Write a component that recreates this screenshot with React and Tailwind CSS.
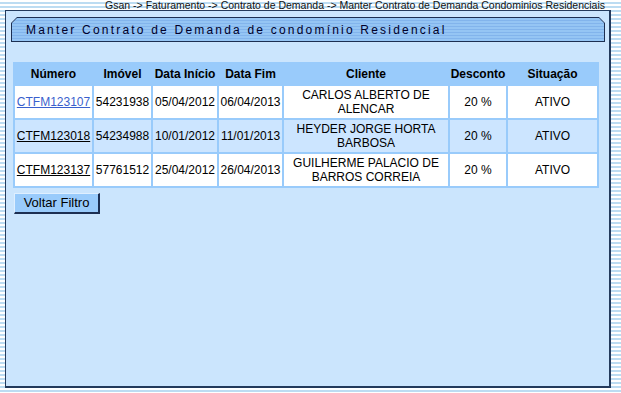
import React from 'react';

const rows = [
  { numero: 'CTFM123107', imovel: '54231938', inicio: '05/04/2012', fim: '06/04/2013', cliente: 'CARLOS ALBERTO DE ALENCAR', desconto: '20 %', situacao: 'ATIVO', visited: false },
  { numero: 'CTFM123018', imovel: '54234988', inicio: '10/01/2012', fim: '11/01/2013', cliente: 'HEYDER JORGE HORTA BARBOSA', desconto: '20 %', situacao: 'ATIVO', visited: true },
  { numero: 'CTFM123137', imovel: '57761512', inicio: '25/04/2012', fim: '26/04/2013', cliente: 'GUILHERME PALACIO DE BARROS CORREIA', desconto: '20 %', situacao: 'ATIVO', visited: true },
];

const headers = [
  { label: 'Número', w: 'w-[77px]' },
  { label: 'Imóvel', w: 'w-[57px]' },
  { label: 'Data Início', w: 'w-[64px]' },
  { label: 'Data Fim', w: 'w-[63px]' },
  { label: 'Cliente', w: 'w-[164px]' },
  { label: 'Desconto', w: 'w-[56px]' },
  { label: 'Situação', w: 'w-[89px]' },
];

function App() {
  return (
    <div className="h-[393px] w-[621px] overflow-hidden bg-[repeating-linear-gradient(to_bottom,#ffffff_0px,#ffffff_2px,#bcdcf2_2px,#bcdcf2_4px)] font-['Liberation_Sans',Arial,sans-serif] text-black">
      <div className="h-[10px] pr-[16px] text-right text-[10.5px] leading-[10px] text-[#111]">
        Gsan -&gt; Faturamento -&gt; Contrato de Demanda -&gt; Manter Contrato de Demanda Condominios Residenciais
      </div>
      <div className="ml-[5px] h-[378px] w-[606px] border border-b-2 border-r-2 border-[#233a5c] bg-[#cbe5fd] pl-[5px] pt-[6px]">
        <div className="h-[25px] w-[594px] bg-[#1c2f52] p-[1px] [clip-path:polygon(6px_0,calc(100%_-_6px)_0,100%_6px,100%_100%,0_100%,0_6px)]">
          <div className="flex h-full items-center bg-[repeating-linear-gradient(to_bottom,#95c5f4_0px,#95c5f4_2px,#82b4ec_2px,#82b4ec_3px)] pl-[14px] text-[12px] tracking-[2.2px] text-[#00002a] [clip-path:polygon(5px_0,calc(100%_-_5px)_0,100%_5px,100%_100%,0_100%,0_5px)]">
            Manter Contrato de Demanda de condomínio Residencial
          </div>
        </div>

        <table className="ml-[2px] mt-[20px] table-fixed border-separate border-spacing-[2px] bg-[#99cbfb] text-[12px] leading-[14px]">
          <thead>
            <tr>
              {headers.map(h => (
                <th key={h.label} className={`${h.w} h-[20px] p-0 text-center font-bold`}>{h.label}</th>
              ))}
            </tr>
          </thead>
          <tbody>
            {rows.map((r, i) => (
              <tr key={r.numero} className={i === 1 ? 'bg-[#cce5ff]' : 'bg-white'}>
                <td className="h-[32px] p-0 text-center">
                  <a href="#" className={r.visited ? 'text-black underline' : 'text-[#3a5fcd] underline'}>{r.numero}</a>
                </td>
                <td className="p-0 text-center">{r.imovel}</td>
                <td className="p-0 text-center">{r.inicio}</td>
                <td className="p-0 text-center">{r.fim}</td>
                <td className="px-[6px] py-0 text-center">{r.cliente}</td>
                <td className="p-0 text-center">{r.desconto}</td>
                <td className="p-0 text-center">{r.situacao}</td>
              </tr>
            ))}
          </tbody>
        </table>

        <button className="ml-[3px] mt-[5px] h-[21px] w-[86px] border border-b-2 border-r-2 border-l-[#dfefff] border-t-[#dfefff] border-b-[#1c2f52] border-r-[#1c2f52] bg-[#99cbfb] text-[13px] leading-[14px] text-black">
          Voltar Filtro
        </button>
      </div>
    </div>
  );
}

export default App;
